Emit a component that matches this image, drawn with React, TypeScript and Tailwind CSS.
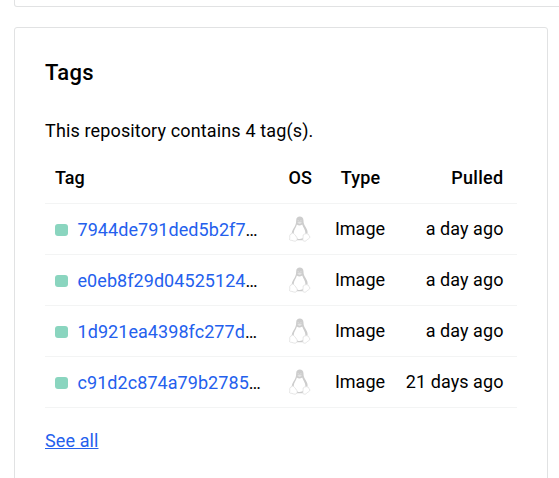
const tags = [
  { name: '7944de791ded5b2f7', pulled: 'a day ago' },
  { name: 'e0eb8f29d04525124', pulled: 'a day ago' },
  { name: '1d921ea4398fc277d', pulled: 'a day ago' },
  { name: 'c91d2c874a79b2785', pulled: '21 days ago' },
];

function Penguin() {
  return (
    <svg className="ml-px" width="22" height="26" viewBox="0 0 22 26" fill="none" aria-hidden="true">
      <path
        d="M7.2 4.2C7.2 1.8 8.7.5 10.8.5s3.7 1.4 3.7 3.9c0 2.7.5 4 2.1 6.5 1.6 2.6 2.7 5 1.6 7.4l-4.4 6H7l-4.2-5c-.4-2 .2-4.3 1.7-6.8 1.6-2.7 2.8-4.4 2.7-8.3Z"
        fill="#cdcdcd"
      />
      <path
        d="M7.9 8.5c1.7 1.4 3.6 1.2 5.3-.1 1.1 3.2 3.2 5.2 3.2 8.4 0 3.7-2.4 6.2-5.7 6.2S4.7 20.3 4.7 17c0-3 2.4-5.5 3.2-8.5Z"
        fill="#fff"
      />
      <path d="M8.2 6.7 10.5 5.6l2.7 1.1-2.6 1.4Z" fill="#e4e4e4" />
      <path d="M9.2 4.4v.9M11.9 4.4v.9" stroke="#f0f0f0" strokeWidth=".8" />
      <path
        d="M1.2 18.6 3.6 17c1.5.4 2.8 2.2 4.2 4.5.7 1.5.4 3-1.3 3.6-1.8.4-3-.9-5.2-.9-.9-.2-1-.8-.6-1.8.2-1.2-.4-2.7.5-3.8ZM14.2 19c.8-1.1 1.8-.9 3-1.4l2.3.7c.2 1.4 1 1.8 1.5 2.7-.1 1.4-2.1 1.8-3.6 3.4-.8 1-2.6 1.1-3.3 0-.7-1.3.3-3.4.1-5.4Z"
        fill="#fff"
        stroke="#dedede"
        strokeWidth=".8"
      />
    </svg>
  );
}

const columns = 'grid grid-cols-[233px_44px_56px_115.5px]';

export default function App() {
  return (
    <main className="h-[478px] overflow-hidden bg-white pl-[14px] font-['Roboto',sans-serif] text-[18px] text-black">
      <div className="h-[7px] w-[560px] rounded-b-[3px] border border-t-0 border-[#e1e2e3]" />
      <section className="mt-5 h-[470px] w-[534px] rounded-[3px] border border-[#e1e2e3] px-[30px] pt-[31px]">
        <h2 className="h-7 text-[22px] leading-7 font-medium tracking-[0.3px]">Tags</h2>
        <p className="mt-8 h-6 leading-6 tracking-[0.14px]">This repository contains 4 tag(s).</p>
        <div className="mt-[9px] w-[472px]">
          <div className={`${columns} h-[52px] items-center border-b border-[#f3f4f4] pl-[10px] font-medium`}>
            <span>Tag</span>
            <span className="pl-[0.5px]">OS</span>
            <span className="pl-px text-center tracking-[0.2px]">Type</span>
            <span className="text-right tracking-[0.3px]">Pulled</span>
          </div>
          {tags.map((tag) => (
            <div key={tag.name} className={`${columns} h-[51px] items-center border-b border-[#f3f4f4] pl-[10px]`}>
              <span className="flex items-center gap-[10px]">
                <i className="mt-[2px] h-3 w-[13px] rounded-[3px] bg-[#8ad5bf]" />
                <span className="-ml-[0.5px] tracking-[0.06px]">
                  <a className="text-[#2460ed]">{tag.name}</a>…
                </span>
              </span>
              <Penguin />
              <span className="pb-[2px] text-center">Image</span>
              <span className="pb-[2px] text-right tracking-[0.07px] whitespace-nowrap">{tag.pulled}</span>
            </div>
          ))}
        </div>
        <a className="mt-[21px] inline-block leading-6 tracking-[0.1px] text-[#2460ed] underline decoration-1 underline-offset-1">See all</a>
      </section>
    </main>
  );
}
